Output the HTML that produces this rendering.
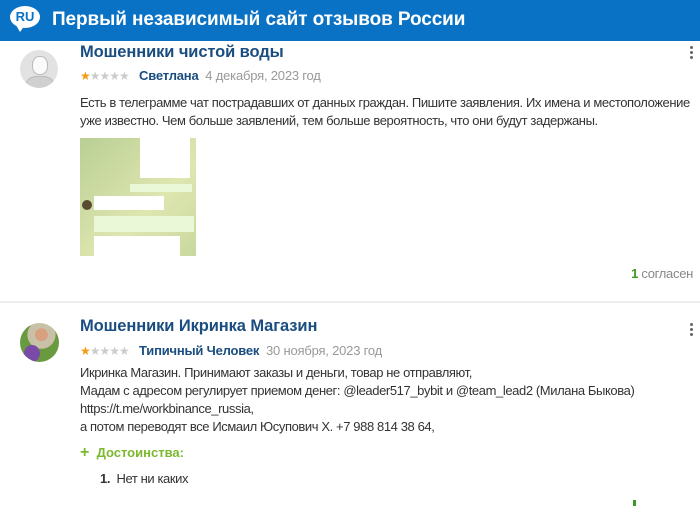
<!DOCTYPE html>
<html><head><meta charset="utf-8"><style>
body{margin:0;width:700px;height:505px;overflow:hidden;background:#fff;font-family:"Liberation Sans",sans-serif;position:relative}
.hdr{position:absolute;left:0;top:0;width:700px;height:41px;background:#0a72c4}
.hdr .t{position:absolute;left:52px;top:9px;color:#fff;font-weight:bold;font-size:19px;letter-spacing:-0.1px}
.ru{position:absolute;left:10px;top:6px;width:30px;height:22px;background:#fff;border-radius:50%;color:#0a72c4;font-weight:bold;font-size:13px;text-align:center;line-height:22px}
.a{position:absolute}
.title{font-size:16.5px;font-weight:bold;color:#1a4d80;letter-spacing:-0.1px}
.meta{font-size:13px;color:#999;letter-spacing:-0.2px}
.meta b{color:#1a4d80}
.txt{font-size:13px;color:#333;line-height:18px;letter-spacing:-0.4px}
.st{color:#ccc;font-size:12px;letter-spacing:-1px}
.st i{color:#f39c12;font-style:normal}
.dots{position:absolute;width:3px}
.dots span{display:block;width:3px;height:3px;background:#666;border-radius:50%;margin-bottom:2px}
</style></head><body>
<div class="hdr"><div class="ru">RU</div><div style="position:absolute;left:16px;top:25px;width:0;height:0;border-left:4px solid transparent;border-right:5px solid transparent;border-top:7px solid #fff"></div><div class="t">Первый независимый сайт отзывов России</div></div>

<div class="a" style="left:20px;top:50px;width:38px;height:38px;border-radius:50%;background:#e2e2e2;overflow:hidden"><div style="position:absolute;left:12px;top:6px;width:14px;height:17px;border-radius:45%;background:#fafafa;border:1px solid #bbb"></div><div style="position:absolute;left:6px;top:26px;width:26px;height:16px;border-radius:40% 40% 0 0;background:#d0d0d0;border:1px solid #bbb"></div></div>
<div class="a title" style="left:80px;top:43px">Мошенники чистой воды</div>
<div class="dots" style="left:690px;top:46px"><span></span><span></span><span></span></div>
<div class="a meta" style="left:80px;top:68px"><span class="st"><i>★</i>★★★★</span>&nbsp;&nbsp; <b>Светлана</b>&nbsp; 4 декабря, 2023 год</div>
<div class="a txt" style="left:80px;top:94px;width:615px">Есть в телеграмме чат пострадавших от данных граждан. Пишите заявления. Их имена и местоположение уже известно. Чем больше заявлений, тем больше вероятность, что они будут задержаны.</div>
<div class="a" style="left:80px;top:138px;width:116px;height:118px;background:linear-gradient(135deg,#b9cf94,#dfe6b0 60%,#c8d89e);overflow:hidden">
<div style="position:absolute;left:60px;top:0;width:50px;height:40px;background:#fff"></div>
<div style="position:absolute;left:50px;top:46px;width:62px;height:8px;background:#eaf8d8"></div>
<div style="position:absolute;left:14px;top:58px;width:70px;height:14px;background:#fff"></div>
<div style="position:absolute;left:2px;top:62px;width:10px;height:10px;border-radius:50%;background:#5a4a30"></div>
<div style="position:absolute;left:14px;top:78px;width:100px;height:16px;background:#eaf8d8"></div>
<div style="position:absolute;left:14px;top:98px;width:86px;height:20px;background:#fff"></div>
</div>
<div class="a" style="right:7px;top:266px;font-size:13px;color:#888;letter-spacing:-0.3px"><b style="color:#3c9a1e">1</b> согласен</div>
<div class="a" style="left:0;top:301px;width:700px;height:2px;background:#eee"></div>

<div class="a" style="left:20px;top:323px;width:39px;height:39px;border-radius:50%;background:radial-gradient(circle at 55% 30%,#d9a080 0 18%,#c9c0a8 19% 40%,#6a9a40 41%);overflow:hidden"><div style="position:absolute;left:4px;top:22px;width:16px;height:17px;background:#7a4aa8;border-radius:50%"></div></div>
<div class="a title" style="left:80px;top:317px">Мошенники Икринка Магазин</div>
<div class="dots" style="left:690px;top:323px"><span></span><span></span><span></span></div>
<div class="a meta" style="left:80px;top:343px"><span class="st"><i>★</i>★★★★</span>&nbsp;&nbsp; <b>Типичный Человек</b>&nbsp; 30 ноября, 2023 год</div>
<div class="a txt" style="left:80px;top:364px;width:615px">Икринка Магазин. Принимают заказы и деньги, товар не отправляют,<br>Мадам с адресом регулирует приемом денег: @leader517_bybit и @team_lead2 (Милана Быкова)<br>https://t.me/workbinance_russia,<br>а потом переводят все Исмаил Юсупович Х. +7 988 814 38 64,</div>
<div class="a" style="left:80px;top:444px;font-size:13px;font-weight:bold;color:#7cb82f"><span style="font-size:16px">+</span>&nbsp; Достоинства:</div>
<div class="a txt" style="left:100px;top:470px"><b>1.</b>&nbsp; Нет ни каких</div>
<div class="a" style="left:633px;top:500px;width:3px;height:6px;background:#3c9a1e"></div>
</body></html>
